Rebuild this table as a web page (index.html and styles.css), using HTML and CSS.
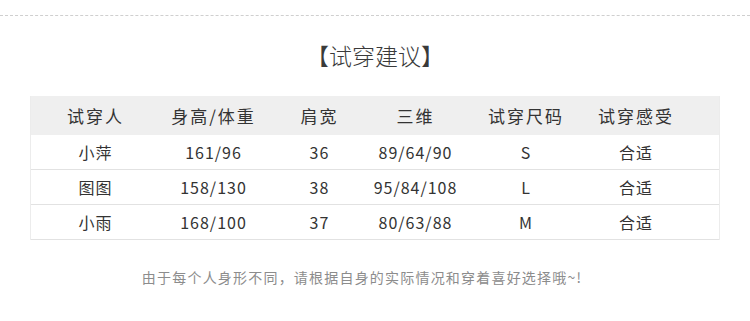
FILE: index.html
```html
<!DOCTYPE html>
<html lang="zh-CN">
<head>
<meta charset="utf-8">
<link rel="stylesheet" href="styles.css">
</head>
<body>
<div class="page">
  <div class="rule"></div>
  <h2 class="title">【试穿建议】</h2>
  <div class="table">
    <div class="row head">
      <div class="cell">试穿人</div>
      <div class="cell">身高/体重</div>
      <div class="cell">肩宽</div>
      <div class="cell">三维</div>
      <div class="cell">试穿尺码</div>
      <div class="cell">试穿感受</div>
    </div>
    <div class="row">
      <div class="cell">小萍</div>
      <div class="cell">161/96</div>
      <div class="cell">36</div>
      <div class="cell">89/64/90</div>
      <div class="cell">S</div>
      <div class="cell">合适</div>
    </div>
    <div class="row">
      <div class="cell">图图</div>
      <div class="cell">158/130</div>
      <div class="cell">38</div>
      <div class="cell">95/84/108</div>
      <div class="cell">L</div>
      <div class="cell">合适</div>
    </div>
    <div class="row">
      <div class="cell">小雨</div>
      <div class="cell">168/100</div>
      <div class="cell">37</div>
      <div class="cell">80/63/88</div>
      <div class="cell">M</div>
      <div class="cell">合适</div>
    </div>
  </div>
  <p class="note">由于每个人身形不同，请根据自身的实际情况和穿着喜好选择哦~!</p>
</div>
</body>
</html>
```
FILE: styles.css
```css
* { box-sizing: border-box; }
html, body { margin: 0; padding: 0; background: #fff; }
body {
  font-family: "Noto Sans CJK SC", "Noto Sans", sans-serif;
  color: #333;
}
.page {
  width: 750px;
  height: 321px;
  padding-top: 15px;
  overflow: hidden;
}
.rule {
  border-top: 1px dashed #cfcfcf;
}
.title {
  margin: 24px 0 0;
  height: 30px;
  line-height: 30px;
  font-size: 23px;
  font-weight: 300;
  text-align: center;
  color: #3a3a3a;
}
.table {
  margin: 26px 30px 0;
  width: 690px;
  border-left: 1px solid #ececec;
  border-right: 1px solid #ececec;
}
.row {
  display: grid;
  grid-template-columns: 129px 107px 105px 87px 134px 86px;
  height: 35px;
  border-bottom: 1px solid #e2e2e2;
  align-items: center;
  font-size: 16px;
  letter-spacing: 1px;
}
.row.head {
  height: 39px;
  background: #efefef;
  border-bottom: none;
  font-size: 17px;
  letter-spacing: 2px;
  color: #333;
}
.cell {
  text-align: center;
  white-space: nowrap;
}
.note {
  margin: 27px 0 0;
  text-align: center;
  font-size: 14px;
  line-height: 20px;
  letter-spacing: 1.2px;
  color: #8c8c8c;
  padding-right: 26px;
}
```
